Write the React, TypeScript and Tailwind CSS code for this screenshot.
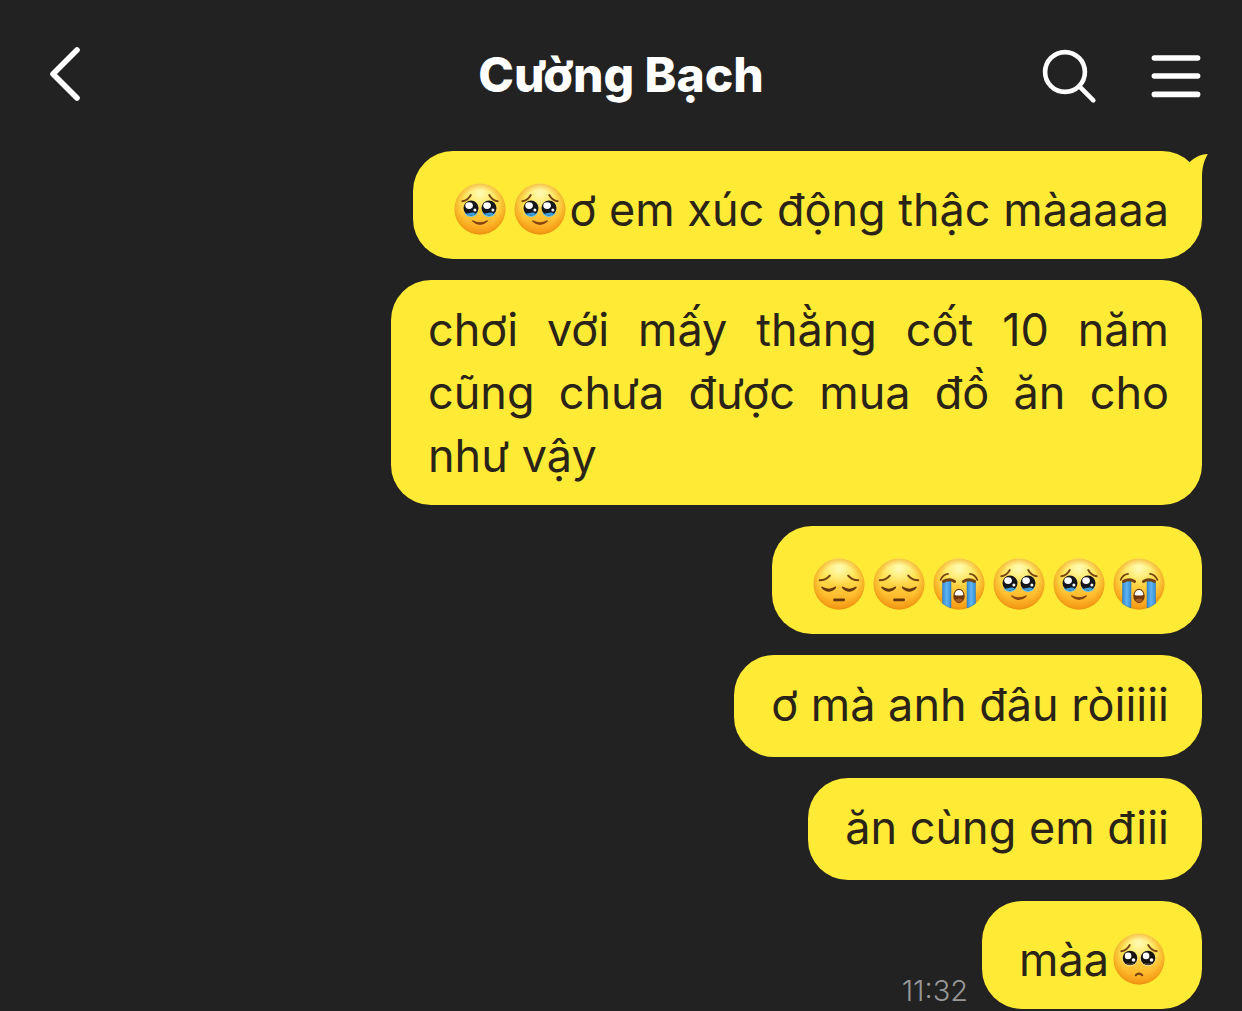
import type { ReactNode } from 'react'

type Mood = 'tears' | 'pensive' | 'crying' | 'pleading'

type Message = {
  id: number
  parts: (string | Mood[])[]
  time?: string
}

const messages: Message[] = [
  { id: 1, parts: [['tears', 'tears'], 'ơ em xúc động thậc màaaaa'] },
  { id: 2, parts: ['chơi với mấy thằng cốt 10 năm cũng chưa được mua đồ ăn cho như vậy'] },
  { id: 3, parts: [['pensive', 'pensive', 'crying', 'tears', 'tears', 'crying']] },
  { id: 4, parts: ['ơ mà anh đâu ròiiiii'] },
  { id: 5, parts: ['ăn cùng em điii'] },
  { id: 6, parts: ['màa', ['pleading']], time: '11:32' },
]

const moodLabels: Record<Mood, string> = {
  tears: '🥹',
  pensive: '😔',
  crying: '😭',
  pleading: '🥺',
}

function WorriedBrows() {
  return (
    <g fill="none" stroke="#7a4410" strokeWidth="1.9" strokeLinecap="round">
      <path d="M8.3 18.3C12 17.8 15 15.3 16.8 12" />
      <path d="M43.7 18.3C40 17.8 37 15.3 35.2 12" />
    </g>
  )
}

function TearyEye({ cx }: { cx: number }) {
  return (
    <g>
      <ellipse cx={cx} cy="29" rx="6.4" ry="5" fill="#62c3ee" />
      <circle cx={cx} cy="25" r="7.5" fill="#15171c" />
      <path d={`M${cx - 4.8} 30.4a7 7 0 0 0 9.6 0q-2.4-1.2-4.8-.6t-4.8.6z`} fill="#3d9fdf" />
      <ellipse cx={cx - 1.9} cy="22.6" rx="3.8" ry="3.4" fill="#fff" />
      <circle cx={cx + 3.9} cy="27" r="1.5" fill="#fff" />
    </g>
  )
}

function PleadingEye({ cx }: { cx: number }) {
  return (
    <g>
      <circle cx={cx} cy="25.4" r="7.7" fill="#fff2ba" />
      <circle cx={cx} cy="25" r="7.3" fill="#17130f" />
      <path d={`M${cx - 4.6} 29.8a6.6 6.6 0 0 0 9.2 0q-4.6 2-9.2 0z`} fill="#70614f" />
      <circle cx={cx - 1.9} cy="22.9" r="3.3" fill="#fff" />
      <circle cx={cx + 3.5} cy="27" r="1.8" fill="#fff" />
    </g>
  )
}

const faces: Record<Mood, ReactNode> = {
  tears: (
    <>
      <WorriedBrows />
      <TearyEye cx={17} />
      <TearyEye cx={35} />
      <path d="M18.8 37.2Q26 41.4 33.2 37.2Q34.4 37.2 33.7 38.4Q26 45.6 18.3 38.4Q17.6 37.2 18.8 37.2Z" fill="#874510" />
    </>
  ),
  pensive: (
    <>
      <g fill="none" stroke="#75420f" strokeWidth="2" strokeLinecap="round">
        <path d="M6.7 22.3C10.8 22.2 14.4 20.6 16.8 17.6" />
        <path d="M45.3 22.3C41.2 22.2 37.6 20.6 35.2 17.6" />
      </g>
      <g fill="#65370d">
        <path d="M9 28.6Q15.8 32.8 22.4 28.6Q23.6 28.6 23 30Q15.8 37.6 8.5 30Q7.9 28.6 9 28.6Z" />
        <path d="M29.6 28.6Q36.2 32.8 43 28.6Q44.1 28.6 43.5 30Q36.2 37.6 29 30Q28.4 28.6 29.6 28.6Z" />
        <rect x="20.2" y="40.4" width="11.8" height="2.8" rx="1.2" />
      </g>
    </>
  ),
  crying: (
    <>
      <path d="M9.5 23H18V50.1Q13.4 48.2 9.5 45.4Z" fill="url(#tear)" stroke="#2378c2" strokeWidth=".5" />
      <path d="M34 23H42.5V45.4Q38.6 48.2 34 50.1Z" fill="url(#tear)" stroke="#2378c2" strokeWidth=".5" />
      <g fill="none" stroke="#75420f" strokeLinecap="round">
        <path d="M7.7 21.8C9 18.4 11.6 16.2 15 15.8" strokeWidth="1.8" />
        <path d="M44.3 21.8C43 18.4 40.4 16.2 37 15.8" strokeWidth="1.8" />
        <path d="M10.5 23.4Q16.3 20 21.6 23.4" strokeWidth="3" />
        <path d="M30.4 23.4Q35.7 20 41.5 23.4" strokeWidth="3" />
      </g>
      <ellipse cx="26" cy="38" rx="5.7" ry="7.2" fill="#70370c" />
      <path d="M21.6 37Q22.2 32 26 32T30.4 37Q26 38.2 21.6 37Z" fill="#fff" />
      <path d="M22 42Q26 38.8 30 42Q28.6 44.4 26 44.4T22 42Z" fill="#a75a20" />
    </>
  ),
  pleading: (
    <>
      <WorriedBrows />
      <PleadingEye cx={17} />
      <PleadingEye cx={35} />
      <path d="M22.8 42.2Q26 39 29.2 42.2" fill="none" stroke="#75420f" strokeWidth="2.2" strokeLinecap="round" />
    </>
  ),
}

// shared gradients for every emoji face
function EmojiDefs() {
  return (
    <svg className="absolute size-0" aria-hidden="true">
      <defs>
        <linearGradient id="face" x1="0" y1="0" x2="0" y2="1">
          <stop offset="0" stopColor="#fff27a" />
          <stop offset=".35" stopColor="#ffe252" />
          <stop offset=".7" stopColor="#ffbf30" />
          <stop offset="1" stopColor="#f9a01c" />
        </linearGradient>
        <radialGradient id="rim" cx=".5" cy=".48" r=".52">
          <stop offset=".68" stopColor="#f0980f" stopOpacity="0" />
          <stop offset=".9" stopColor="#f0980f" stopOpacity=".5" />
          <stop offset="1" stopColor="#e88a0c" stopOpacity=".8" />
        </radialGradient>
        <radialGradient id="shine" cx=".5" cy=".2" r=".34">
          <stop offset="0" stopColor="#fffcc0" stopOpacity=".9" />
          <stop offset="1" stopColor="#fff9a0" stopOpacity="0" />
        </radialGradient>
        <linearGradient id="tear" x1="0" y1="0" x2="1" y2="0">
          <stop offset="0" stopColor="#318bd6" />
          <stop offset=".5" stopColor="#62b4f0" />
          <stop offset="1" stopColor="#318bd6" />
        </linearGradient>
      </defs>
    </svg>
  )
}

function Emoji({ mood }: { mood: Mood }) {
  return (
    <svg viewBox="0 0 52 52" role="img" aria-label={moodLabels[mood]} className="size-[52px] shrink-0">
      <circle cx="26" cy="26" r="25.5" fill="url(#face)" />
      <circle cx="26" cy="26" r="25.5" fill="url(#shine)" />
      <circle cx="26" cy="26" r="25.5" fill="url(#rim)" />
      {faces[mood]}
    </svg>
  )
}

function Tail() {
  return (
    <svg viewBox="0 0 24 48" aria-hidden="true" className="absolute top-0 -right-1.5 h-12 w-6 fill-[#ffea35]">
      <path d="M5.5 11.2C10.5 6.8 16 3 23.8 3C20.6 8.6 18.2 15 18 26V40L4 24Z" />
    </svg>
  )
}

function Bubble({ message, first }: { message: Message; first: boolean }) {
  const hasEmoji = message.parts.some((part) => Array.isArray(part))

  return (
    <li className="flex items-end justify-end gap-3.5">
      {message.time && <time className="text-[29px] leading-9 font-light text-[#989898]">{message.time}</time>}
      <div
        className={`relative max-w-[811px] rounded-[40px] bg-[#ffea35] pr-[33px] pl-[37px] text-[45px] leading-[63px] text-[#2a2418] ${
          hasEmoji ? 'flex min-h-[108px] items-center pt-2' : 'min-h-[102px] py-[18px] text-justify'
        }`}
      >
        {message.parts.map((part, i) =>
          Array.isArray(part) ? (
            <span key={i} className="flex gap-2 px-1">
              {part.map((mood, j) => (
                <Emoji key={j} mood={mood} />
              ))}
            </span>
          ) : (
            <p key={i}>{part}</p>
          ),
        )}
        {first && <Tail />}
      </div>
    </li>
  )
}

export default function App() {
  return (
    <div className="min-h-screen bg-[#222222] font-['Inter',sans-serif]">
      <EmojiDefs />
      <header className="grid grid-cols-[1fr_auto_1fr] items-start px-9 pt-[46px] pb-[45px] text-white">
        <button type="button" aria-label="Back" className="size-[60px]">
          <svg viewBox="0 0 60 60" fill="none" stroke="currentColor" strokeWidth="5.6" strokeLinecap="round" strokeLinejoin="round">
            <path d="M41 4L17 28L41 52" />
          </svg>
        </button>
        <h1 className="text-5xl leading-[58px] font-extrabold">Cường Bạch</h1>
        <div className="flex justify-end gap-12">
          <button type="button" aria-label="Search" className="size-[60px]">
            <svg viewBox="0 0 60 60" fill="none" stroke="currentColor" strokeWidth="4.6" strokeLinecap="round">
              <circle cx="27" cy="26" r="19.9" />
              <path d="M41.4 40.4L55.3 54.3" />
            </svg>
          </button>
          <button type="button" aria-label="Menu" className="size-[60px]">
            <svg viewBox="0 0 60 60" fill="none" stroke="currentColor" strokeWidth="5.6" strokeLinecap="round">
              <path d="M8.4 12H51.6M8.4 30H51.6M8.4 48.4H51.6" />
            </svg>
          </button>
        </div>
      </header>
      <main className="px-10">
        <ul className="flex flex-col gap-[21px]">
          {messages.map((message, i) => (
            <Bubble key={message.id} message={message} first={i === 0} />
          ))}
        </ul>
      </main>
    </div>
  )
}
